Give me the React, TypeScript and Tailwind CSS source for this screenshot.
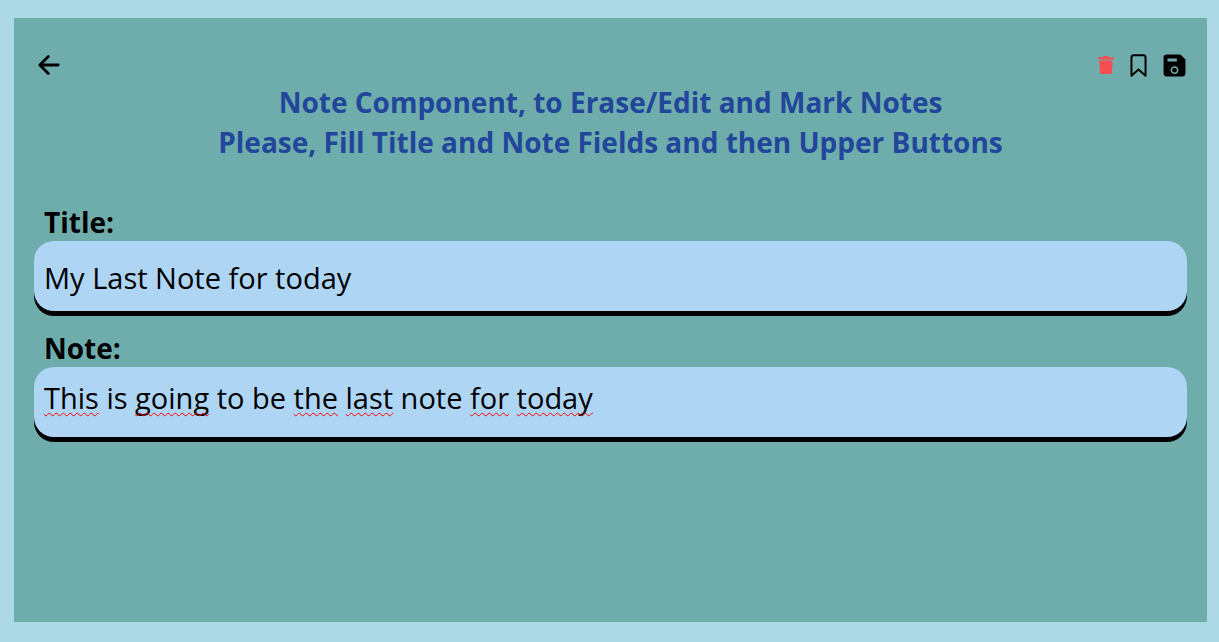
import React, { useState } from "react";
import { IoArrowBack, IoBookmarkOutline, IoSave } from "react-icons/io5";
import { FaTrash } from "react-icons/fa";

const FIELD =
  "w-full rounded-[20px] bg-[#afd5f5] px-[10px] text-[29px] text-black shadow-[0_5px_0_#000] outline-none";
const LABEL = "block px-[10px] text-[28px] leading-[38px] font-bold text-black";
const NOTE_TEXT = "col-start-1 row-start-1 h-[70px] pt-[11px] leading-[40px]";

const flaggedWords = new Set(["This", "going", "the", "last", "for", "today"]);

function SpellingMarks({ text }: { text: string }) {
  return (
    <div
      aria-hidden="true"
      className={`${NOTE_TEXT} pointer-events-none z-10 overflow-hidden px-[10px] text-[29px] whitespace-pre-wrap text-transparent`}
    >
      {text.split(/(\s+)/).map((part, i) =>
        flaggedWords.has(part) ? (
          <span
            key={i}
            className="underline decoration-[#ff0000] decoration-wavy decoration-1 underline-offset-3 [text-decoration-skip-ink:none]"
          >
            {part}
          </span>
        ) : (
          part
        ),
      )}
    </div>
  );
}

export default function App() {
  const [title, setTitle] = useState("My Last Note for today");
  const [note, setNote] = useState("This is going to be the last note for today");

  return (
    <div className="flex min-h-screen bg-[#add8e6] pt-[18px] pr-3 pb-5 pl-[14px] font-['Open_Sans','Noto_Sans',sans-serif]">
      <main className="flex-1 bg-[#6fadad] px-5 pt-[30px] pb-5">
        <header className="flex h-[34px] items-center justify-between text-black">
          <button type="button" aria-label="Back">
            <IoArrowBack size={30} />
          </button>
          <div className="flex items-center gap-[11px]">
            <button type="button" aria-label="Erase note" className="text-[#f44e50]">
              <FaTrash size={18} />
            </button>
            <button type="button" aria-label="Mark note">
              <IoBookmarkOutline size={25} className="[&_path]:stroke-[40]" />
            </button>
            <button type="button" aria-label="Save note">
              <IoSave size={25} />
            </button>
          </div>
        </header>

        <h1 className="text-center text-[28px] leading-10 font-bold text-[#21469a]">
          Note Component, to Erase/Edit and Mark Notes
          <br />
          Please, Fill Title and Note Fields and then Upper Buttons
        </h1>

        <form className="mt-[41px] flex flex-col gap-[18px]" onSubmit={(e) => e.preventDefault()}>
          <div>
            <label htmlFor="title" className={LABEL}>
              Title:
            </label>
            <input
              id="title"
              type="text"
              value={title}
              onChange={(e) => setTitle(e.target.value)}
              className={`${FIELD} block h-[70px] pt-[2px]`}
            />
          </div>
          <div>
            <label htmlFor="note" className={LABEL}>
              Note:
            </label>
            <div className="grid">
              <textarea
                id="note"
                value={note}
                spellCheck={false}
                onChange={(e) => setNote(e.target.value)}
                className={`${FIELD} ${NOTE_TEXT} resize-none overflow-hidden`}
              />
              <SpellingMarks text={note} />
            </div>
          </div>
        </form>
      </main>
    </div>
  );
}
